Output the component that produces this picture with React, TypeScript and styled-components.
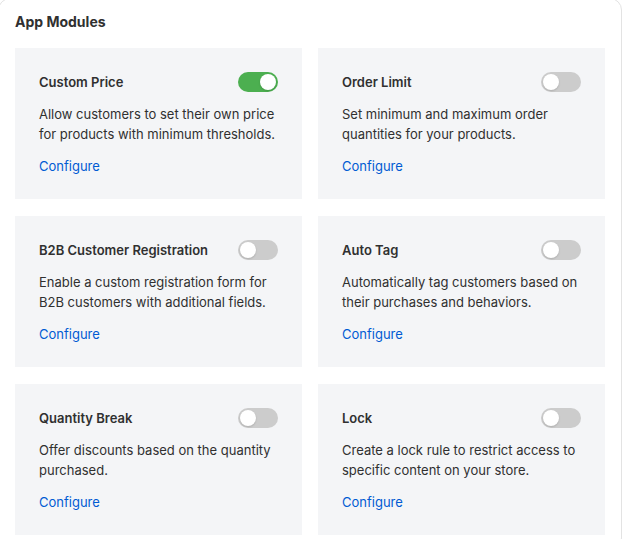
import React, { useState } from "react";
import styled, { createGlobalStyle } from "styled-components";

const GlobalStyle = createGlobalStyle`
  html, body {
    margin: 0;
    padding: 0;
    background: #ffffff;
    overflow: hidden;
  }
  body {
    font-family: Inter, "Noto Sans", sans-serif;
    color: #303030;
    -webkit-font-smoothing: antialiased;
  }
`;

const Panel = styled.section`
  box-sizing: border-box;
  width: 624px;
  margin: -2px 0 0 -2px;
  padding: 13px 15px 14px 16px;
  background: #ffffff;
  border: 1px solid #e3e3e3;
  border-radius: 12px;
`;

const Heading = styled.h2`
  margin: 0 0 16px;
  font-size: 14px;
  line-height: 20px;
  font-weight: 650;
  color: #303030;
`;

const Grid = styled.div`
  display: grid;
  grid-template-columns: 287px 287px;
  column-gap: 16px;
  row-gap: 17px;
`;

const Card = styled.div`
  box-sizing: border-box;
  height: 151px;
  padding: 24px 24px 23px;
  background: #f4f5f7;
  display: flex;
  flex-direction: column;
`;

const CardHeader = styled.div`
  display: flex;
  align-items: center;
  justify-content: space-between;
  height: 20px;
`;

const Title = styled.h3`
  margin: 0;
  font-size: 13px;
  line-height: 20px;
  font-weight: 600;
  color: #303030;
`;

const Description = styled.p`
  margin: 12px 0 0;
  font-size: 13px;
  line-height: 20px;
  color: #303030;
  height: 40px;
`;

const ConfigureLink = styled.a`
  margin-top: 12px;
  font-size: 13px;
  line-height: 20px;
  color: #005bd3;
  text-decoration: none;
  cursor: pointer;
  align-self: flex-start;
`;

const Track = styled.button<{ $on: boolean }>`
  position: relative;
  width: 40px;
  height: 20px;
  padding: 0;
  border: none;
  border-radius: 10px;
  background: ${(p) => (p.$on ? "#4caf50" : "#cccccc")};
  cursor: pointer;
  flex-shrink: 0;
`;

const Knob = styled.span<{ $on: boolean }>`
  position: absolute;
  top: 2px;
  left: ${(p) => (p.$on ? "22px" : "2px")};
  width: 16px;
  height: 16px;
  border-radius: 50%;
  background: #ffffff;
  box-shadow: 0 1px 2px rgba(0, 0, 0, 0.15);
  transition: left 0.15s ease;
`;

type Module = {
  title: string;
  description: string;
  enabled: boolean;
};

const modules: Module[] = [
  {
    title: "Custom Price",
    description: "Allow customers to set their own price for products with minimum thresholds.",
    enabled: true,
  },
  {
    title: "Order Limit",
    description: "Set minimum and maximum order quantities for your products.",
    enabled: false,
  },
  {
    title: "B2B Customer Registration",
    description: "Enable a custom registration form for B2B customers with additional fields.",
    enabled: false,
  },
  {
    title: "Auto Tag",
    description: "Automatically tag customers based on their purchases and behaviors.",
    enabled: false,
  },
  {
    title: "Quantity Break",
    description: "Offer discounts based on the quantity purchased.",
    enabled: false,
  },
  {
    title: "Lock",
    description: "Create a lock rule to restrict access to specific content on your store.",
    enabled: false,
  },
];

function Toggle({ on, onChange }: { on: boolean; onChange: () => void }) {
  return (
    <Track $on={on} onClick={onChange} role="switch" aria-checked={on}>
      <Knob $on={on} />
    </Track>
  );
}

function ModuleCard({ module }: { module: Module }) {
  const [on, setOn] = useState(module.enabled);
  return (
    <Card>
      <CardHeader>
        <Title>{module.title}</Title>
        <Toggle on={on} onChange={() => setOn(!on)} />
      </CardHeader>
      <Description>{module.description}</Description>
      <ConfigureLink>Configure</ConfigureLink>
    </Card>
  );
}

export default function App() {
  return (
    <>
      <GlobalStyle />
      <Panel>
        <Heading>App Modules</Heading>
        <Grid>
          {modules.map((m) => (
            <ModuleCard key={m.title} module={m} />
          ))}
        </Grid>
      </Panel>
    </>
  );
}
